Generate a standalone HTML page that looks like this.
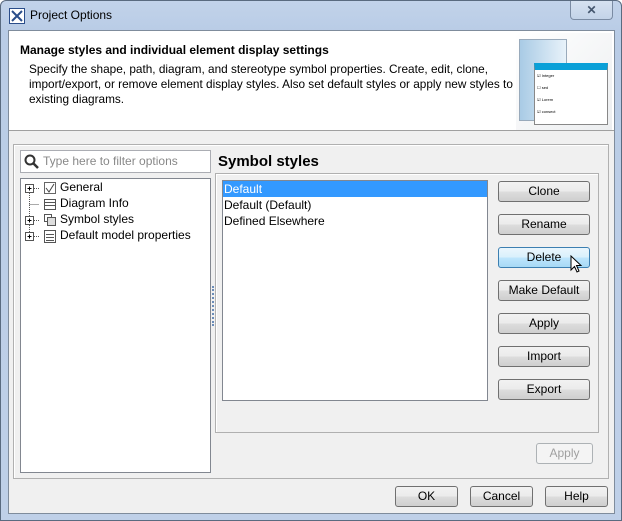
<!DOCTYPE html>
<html><head><style>
*{margin:0;padding:0;box-sizing:border-box}
body{width:622px;height:521px;overflow:hidden;font-family:"Liberation Sans",sans-serif;font-size:12px;background:#fff;position:relative}
.frame{position:absolute;left:0;top:0;width:622px;height:521px;background:linear-gradient(#c2d3ea,#b9cce6 30px,#bfd0e8);border:1px solid #5a6b80;border-radius:6px 6px 0 0}
.client{position:absolute;left:8px;top:30px;width:607px;height:484px;background:#f0f0f0;border:1px solid #7f8c9c}
.abs{position:absolute}
.hdr{left:0;top:0;width:605px;height:100px;background:#fff;border-bottom:1px solid #a0a0a0}
.btn{position:absolute;width:92px;height:21px;border:1px solid #707070;border-radius:3px;background:linear-gradient(#f2f2f2 0,#ebebeb 50%,#dddddd 50%,#cfcfcf);text-align:center;line-height:19px;color:#000}
.box{position:absolute;background:#fff;border:1px solid #828790}
.panel{position:absolute;border:1px solid #b0b0b0;box-shadow:inset 1px 1px 0 #fff}
.tree div{position:absolute;left:39px;height:16px;line-height:16px}
</style></head><body>
<div class="frame">
<svg class="abs" style="left:8px;top:7px" width="16" height="16"><rect x="0.5" y="0.5" width="15" height="15" fill="#fff" stroke="#2a4d8a"/><path d="M3 3 L13 13 M13 3 L3 13" stroke="#2a4d8a" stroke-width="2"/></svg>
<div class="abs" style="left:29px;top:7px;font-size:12px;color:#000">Project Options</div>
<div class="abs" style="left:569px;top:0;width:43px;height:19px;border:1px solid #7a8ba3;border-top:none;border-radius:0 0 4px 4px;background:linear-gradient(#d6e2f1,#c3d3e8);text-align:center;font-weight:bold;color:#44566e;line-height:18px">✕</div>
</div>
<div class="client">
<div class="abs hdr">
<div class="abs" style="left:11px;top:12px;font-weight:bold;font-size:12px">Manage styles and individual element display settings</div>
<div class="abs" style="left:20px;top:31px;line-height:15px;width:500px;font-size:11.8px">Specify the shape, path, diagram, and stereotype symbol properties. Create, edit, clone, import/export, or remove element display styles. Also set default styles or apply new styles to existing diagrams.</div>
<div class="abs" style="left:507px;top:2px;width:96px;height:97px;background:linear-gradient(135deg,#fff,#eceef0)"></div>
<div class="abs" style="left:510px;top:8px;width:48px;height:82px;background:linear-gradient(90deg,#a9cbe5,#e8f2fa);border:1px solid #9ab"></div>
<div class="abs" style="left:525px;top:32px;width:74px;height:62px;background:#fff;border:1px solid #888;border-top:7px solid #0aa0d8;font-size:4px;line-height:12px;padding-left:2px">
<div>☑ Integer</div><div>☐ sed</div><div>☑ Lorem</div><div>☑ consect</div></div>
</div>
<div class="panel" style="left:4px;top:113px;width:596px;height:335px"></div>
<div class="box" style="left:11px;top:119px;width:191px;height:23px;border-color:#abadb3;color:#888;line-height:20px;padding-left:22px">Type here to filter options</div>
<svg class="abs" style="left:15px;top:123px" width="16" height="16"><circle cx="6" cy="6" r="4.5" fill="none" stroke="#333" stroke-width="2"/><path d="M9 9 L14 14" stroke="#333" stroke-width="2.5"/></svg>
<div class="box tree" style="left:11px;top:147px;width:191px;height:295px">
<svg class="abs" style="left:3px;top:2px" width="36" height="70"><g stroke="#555" fill="none" stroke-width="1"><rect x="1.5" y="3.5" width="8" height="8" fill="#fff"/><rect x="1.5" y="51.5" width="8" height="8"/><rect x="1.5" y="35.5" width="8" height="8"/></g><path d="M3.5 7.5h4M5.5 5.5v4M3.5 39.5h4M5.5 37.5v4M3.5 55.5h4M5.5 53.5v4" stroke="#000"/><path d="M10 7.5h6M10 39.5h6M10 55.5h6M5.5 12v23M5.5 23.5h10M5.5 44v7" stroke="#555" stroke-dasharray="1 1"/><rect x="20.5" y="1.5" width="11" height="11" fill="#fff" stroke="#666"/><path d="M22 7l3 4 5-8" stroke="#444" fill="none"/><rect x="20.5" y="18.5" width="11" height="10" fill="#fff" stroke="#555"/><path d="M21 21.5h10M21 24.5h10" stroke="#555"/><rect x="20.5" y="33.5" width="7" height="7" fill="#fff" stroke="#555"/><rect x="23.5" y="36.5" width="8" height="8" fill="#ddd" stroke="#555"/><rect x="20.5" y="49.5" width="11" height="12" fill="#fff" stroke="#555"/><path d="M22 53.5h8M22 56.5h8M22 59.5h8" stroke="#555"/></svg>
<div style="top:0">General</div><div style="top:16px">Diagram Info</div><div style="top:32px">Symbol styles</div><div style="top:48px">Default model properties</div>
</div>
<div class="abs" style="left:203px;top:255px;width:3px;height:40px;border-left:2px dotted #6a8cb8"></div>
<div class="abs" style="left:209px;top:122px;font-weight:bold;font-size:15px">Symbol styles</div>
<div class="panel" style="left:206px;top:142px;width:384px;height:260px"></div>
<div class="box" style="left:213px;top:149px;width:266px;height:221px;line-height:16px">
<div style="background:#3399ff;color:#fff;padding-left:1px">Default</div>
<div style="padding-left:1px">Default (Default)</div>
<div style="padding-left:1px">Defined Elsewhere</div>
</div>
<div class="btn" style="left:489px;top:150px">Clone</div>
<div class="btn" style="left:489px;top:183px">Rename</div>
<div class="btn" style="left:489px;top:216px;border-color:#3c7fb1;background:linear-gradient(#eaf6fd 0,#d9f0fc 50%,#bee6fd 50%,#a7d9f5)">Delete</div>
<svg class="abs" style="left:561px;top:224px" width="14" height="20"><path d="M1 1 L1 15 L4.5 11.5 L7 17 L9 16 L6.5 10.5 L11 10.5 Z" fill="#fff" stroke="#000"/></svg>
<div class="btn" style="left:489px;top:249px">Make Default</div>
<div class="btn" style="left:489px;top:282px">Apply</div>
<div class="btn" style="left:489px;top:315px">Import</div>
<div class="btn" style="left:489px;top:348px">Export</div>
<div class="btn" style="left:527px;top:412px;width:57px;border-color:#adb2b5;background:#f4f4f4;color:#a0a0a0">Apply</div>
<div class="btn" style="left:386px;top:455px;width:63px">OK</div>
<div class="btn" style="left:461px;top:455px;width:63px">Cancel</div>
<div class="btn" style="left:536px;top:455px;width:63px">Help</div>
</div>
</body></html>
